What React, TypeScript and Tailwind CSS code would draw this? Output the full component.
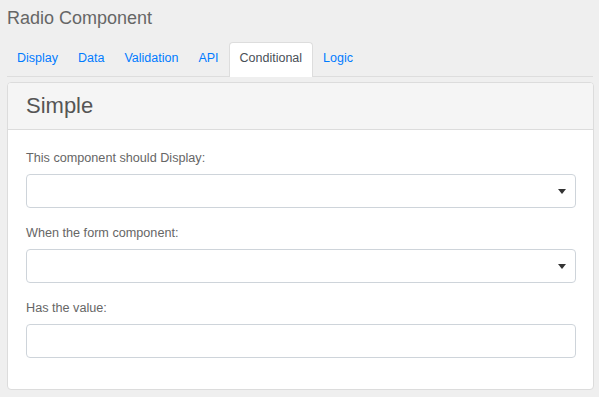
import React from 'react'

const tabs = ['Display', 'Data', 'Validation', 'API', 'Conditional', 'Logic']

export default function App() {
  return (
    <div className="w-[599px] h-[397px] bg-[#efefef] pl-[7px] pr-[5px] pt-[7px] font-['Liberation_Sans',Arial,sans-serif] overflow-hidden">
      <h1 className="text-[18px] leading-[22px] text-[#666] mb-[13px]">Radio Component</h1>

      <ul className="flex border-b border-[#dddddd] mr-[1px]">
        {tabs.map((t) => {
          const active = t === 'Conditional'
          return (
            <li key={t} className={active ? '-mb-px' : ''}>
              <a
                className={
                  active
                    ? 'block border border-b-0 border-[#dddddd] rounded-t-[4px] bg-white px-[10px] pt-[5px] pb-[9px] text-[12.5px] leading-[20px] text-[#495057]'
                    : 'block border border-b-0 border-transparent px-[9px] pt-[5px] pb-[8px] text-[12.5px] leading-[20px] text-[#007bff]'
                }
              >
                {t}
              </a>
            </li>
          )
        })}
      </ul>

      <section className="mt-[5px] bg-white border border-[#dcdcdc] rounded-[4px] overflow-hidden">
        <header className="bg-[#f5f5f5] border-b border-[#dcdcdc] px-[18px] py-[10px]">
          <h2 className="text-[22px] leading-[26px] text-[#555]">Simple</h2>
        </header>
        <div className="pl-[18px] pr-[17px] pt-[18px] pb-[16px]">
          <Field label="This component should Display:" select />
          <Field label="When the form component:" select />
          <Field label="Has the value:" />
        </div>
      </section>
    </div>
  )
}

function Field({ label, select }: { label: string; select?: boolean }) {
  return (
    <div className="mb-[15px]">
      <label className="block text-[12.65px] leading-[20px] text-[#666] mb-[6px]">{label}</label>
      <div className="h-[34px] border border-[#ced4da] rounded-[4px] bg-white flex items-center justify-end pr-[9px]">
        {select && (
          <span className="w-0 h-0 border-l-[4px] border-r-[4px] border-t-[5px] border-l-transparent border-r-transparent border-t-[#333]" />
        )}
      </div>
    </div>
  )
}
